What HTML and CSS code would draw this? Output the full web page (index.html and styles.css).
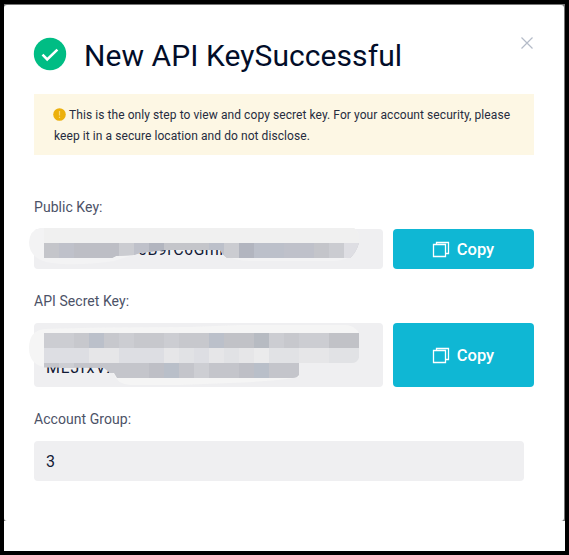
FILE: index.html
```html
<!DOCTYPE html>
<html lang="en">
<head>
<meta charset="utf-8">
<title>New API Key</title>
<link rel="stylesheet" href="styles.css">
</head>
<body>
<div class="backdrop">
<main class="dialog">
  <header class="head">
    <svg class="ok" viewBox="0 0 34 34"><circle cx="17" cy="17" r="16.2" fill="#00bd84"/><path d="M9.5 17.7l4.7 4.7 10.2-9.8" fill="none" stroke="#fff" stroke-width="2.6"/></svg>
    <h1>New API KeySuccessful</h1>
    <svg class="close" viewBox="0 0 12 12"><path d="M.5.5l11 11M11.500.5l-11 11" fill="none" stroke="#b4bbc8" stroke-width="1.2"/></svg>
  </header>
  <p class="notice"><svg class="warn" viewBox="0 0 13 13"><circle cx="6.500" cy="6.500" r="6.300" fill="#ecb00c"/><path d="M6.500 3v4.500M6.500 8.800v1.300" stroke="#f8d778" stroke-width="1.200"/></svg>This is the only step to view and copy secret key. For your account security, please keep it in a secure location and do not disclose.</p>
  <section class="field">
    <label>Public Key:</label>
    <div class="row">
      <div class="value public"><span>0B9rC6Gmi</span>
        <svg class="mask" width="340" height="50" viewBox="29 222 340 50">
          <path d="M40 228H354Q360 232 359 243Q354 262 331 261L250 261Q228 261 222 250H164L140 253L114 261Q72 267 46 262Q29 257 29 242Q30 230 40 228Z" fill="#f3f3f4"/>
          <path d="M44 228H354Q360 232 359 243H44Z" fill="#f0f0f0"/>
          <clipPath id="a"><path d="M44 243H359Q356 253 350 258H227Q222 254 220 250H164L140 253L134 255L116 256L112 258H44Z"/></clipPath>
          <g clip-path="url(#a)">
            <path fill="#c4c5ca" d="M44 243h315v15H44z"/>
            <path fill="#bfc1ca" d="M59 243h15v15H59zM134 243h15v15h-15zM284 243h30v15h-30z"/>
            <path fill="#bdbec5" d="M74 243h45v15H74z"/>
            <path fill="#cbccd1" d="M119 243h15v15h-15zM224 243h15v15h-15zM329 243h15v15h-15z"/>
            <path fill="#b2b5bf" d="M149 243h15v15h-15zM239 243h15v15h-15z"/>
            <path fill="#bcc0ca" d="M209 243h15v15h-15zM254 243h30v15h-30z"/>
            <path fill="#dedee3" d="M344 243h15v15h-15z"/>
          </g>
        </svg>
      </div>
      <button><svg viewBox="0 0 18 17"><path d="M1.500 3.500h12v12H1.500zM4.500 3.500V1.500H16.500V12.500H13.500" fill="none" stroke="#fff" stroke-width="1.300"/></svg><span>Copy</span></button>
    </div>
  </section>
  <section class="field secret-field">
    <label>API Secret Key:</label>
    <div class="row">
      <div class="value secret"><span>MLJfxVX</span>
        <svg class="mask" width="340" height="64" viewBox="29 323 340 64">
          <path d="M44 329Q100 327 190 327L240 325H345Q354 325 359 333V358Q356 363 350 363H299V377Q280 381 230 383L180 385H130Q117 384 114 374L104 367H44Q29 364 29 348Q29 331 44 329Z" fill="#f5f5f5"/>
          <path fill="#c7c8cd" d="M44 333h315v15H44z"/>
          <path fill="#cccdd2" d="M44 333h30v15H44zM119 333h15v15h-15zM164 333h15v15h-15zM269 333h15v15h-15zM299 333h30v15h-30z"/>
          <path fill="#bbc0ca" d="M89 333h15v15H89zM209 333h15v15h-15z"/>
          <path fill="#b7bbc2" d="M254 333h15v15h-15z"/>
          <path fill="#c1c2c7" d="M224 333h30v15h-30zM329 333h30v15h-30z"/>
          <path fill="#dddee3" d="M44 348h165v15H44z"/>
          <path fill="#e6e6e8" d="M89 348h30v15H89zM164 348h15v15h-15zM209 348h15v15h-15zM239 348h15v15h-15zM299 348h30v15h-30z"/>
          <path fill="#e1e2e5" d="M179 348h15v15h-15zM224 348h15v15h-15zM269 348h30v15h-30zM329 348h15v15h-15zM344 348h15v10q-2 5-7 5h-8z"/>
          <path fill="#ebebec" d="M254 348h15v15h-15z"/>
          <path fill="#c4c5cb" d="M44 363h255v12q-2 3-6 3H117L114 373H110L104 368L44 367.500z"/>
          <path fill="#bebfc6" d="M149 363h15v15h-15zM239 363h15v15h-15z"/>
          <path fill="#b9bfc9" d="M164 363h15v15h-15zM254 363h15v15h-15z"/>
          <path fill="#cdced3" d="M194 363h15v15h-15zM59 363h15v5H59z"/>
        </svg>
      </div>
      <button><svg viewBox="0 0 18 17"><path d="M1.500 3.500h12v12H1.500zM4.500 3.500V1.500H16.500V12.500H13.500" fill="none" stroke="#fff" stroke-width="1.300"/></svg><span>Copy</span></button>
    </div>
  </section>
  <section class="field group">
    <label>Account Group:</label>
    <div class="value account">3</div>
  </section>
</main>
</div>
</body>
</html>
```

FILE: styles.css
```css
* { box-sizing: border-box; }
body { margin: 0; height: 555px; border: 4px solid #000; background: #fff; font-family: Roboto, sans-serif; color: #121a36; overflow: hidden; }
.backdrop { height: 517px; padding: 1px 1px 0 0; background: #777; }
.dialog { height: 516px; padding: 29px 30px 0; border-radius: 3px; background: #fff; }
.head { display: flex; height: 40px; align-items: center; }
.ok { width: 34px; height: 34px; margin-left: -1px; }
h1 { margin: 4px 0 0 17px; font-size: 30px; line-height: 38px; font-weight: 400; letter-spacing: .07px; color: #020d29; white-space: nowrap; }
.close { width: 12px; height: 12px; margin: -22px 1px 0 auto; }
.notice { width: 500px; height: 61px; margin: 20px 0 0; padding: 11px 20px 9px; background: #fdf7e4; font-size: 12px; line-height: 21px; letter-spacing: .072px; color: #262c3e; }
.warn { width: 13px; height: 13px; margin: 0 3px 0 -1px; vertical-align: -2px; }
.field { margin-top: 43px; }
.secret-field { margin-top: 23px; }
.group { margin-top: 23px; }
label { display: block; height: 18px; margin-bottom: 13px; font-size: 14px; line-height: 18px; letter-spacing: .05px; color: #4c5267; }
.row { display: flex; gap: 10px; }
.value { position: relative; width: 349px; height: 40px; border-radius: 4px; background: #efeff1; font-size: 16px; line-height: 42px; }
.public { padding-left: 104px; letter-spacing: .45px; }
.secret { height: 64px; padding: 33px 0 0 12px; line-height: 24px; letter-spacing: .9px; }
.account { width: 490px; padding-left: 12px; }
.mask { position: absolute; left: -5px; top: 0; }
.public .mask { top: -7px; }
button { display: flex; align-items: center; justify-content: center; gap: 7px; width: 141px; padding: 0 1px 0 0; border: 0; border-radius: 4px; background: #0fb7d4; color: #fff; font: 500 16.500px/20px Roboto, sans-serif; }
button svg { width: 18px; height: 17px; }
button span { padding-top: 1px; }
```
